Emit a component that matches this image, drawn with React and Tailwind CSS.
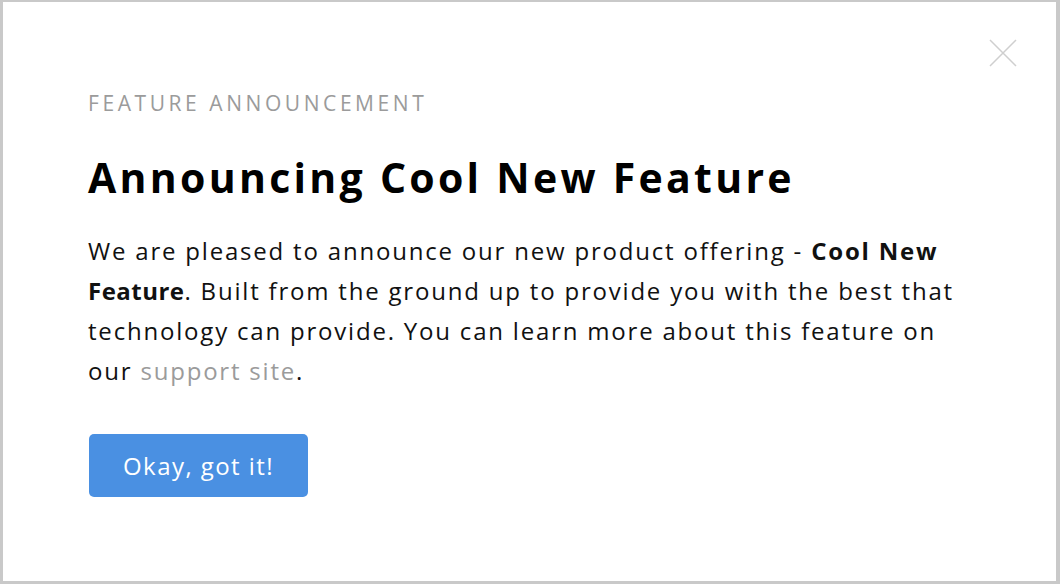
export default function App() {
  return (
    <div className="w-[1060px] h-[584px] bg-[#e0e0e0] p-0">
      <div
        className="relative w-full h-full bg-white border-l-[3px] border-t-2 border-r-[4px] border-b-[3px] border-[#c9c9c9] pl-[85px] pt-[87px]"
        style={{ fontFamily: "'Open Sans', sans-serif" }}
      >
        <button className="absolute top-[36px] right-[38px] w-[30px] h-[30px] text-[#cfcfcf]">
          <svg viewBox="0 0 30 30" width="30" height="30" fill="none" stroke="currentColor" strokeWidth="1.5">
            <path d="M2 2 L28 28 M28 2 L2 28" />
          </svg>
        </button>
        <div className="text-[21px] leading-[28px] tracking-[0.17em] text-[#9b9b9b] uppercase whitespace-nowrap">
          Feature Announcement
        </div>
        <h1 className="mt-[35px] text-[41px] leading-[50px] font-bold tracking-[0.08em] text-black whitespace-nowrap">
          Announcing Cool New Feature
        </h1>
        <p className="mt-[29px] text-[24px] leading-[40px] tracking-[0.075em] text-[#111] whitespace-nowrap">
          We are pleased to announce our new product offering - <b>Cool New</b>
          <br />
          <b className="tracking-[0.02em]">Feature</b>. Built from the ground up to provide you with the
          best that
          <br />
          technology can provide. You can learn more about this feature on
          <br />
          our <a className="text-[#9b9b9b]">support site</a>.
        </p>
        <button className="mt-[43px] ml-[1px] w-[219px] h-[63px] rounded-[5px] bg-[#4a90e2] text-white text-[24px] tracking-[0.06em]">
          Okay, got it!
        </button>
      </div>
    </div>
  );
}
